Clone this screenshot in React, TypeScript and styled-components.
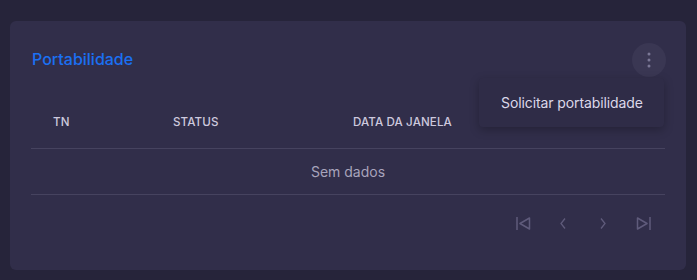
import React from 'react'
import styled, { createGlobalStyle } from 'styled-components'

const GlobalStyle = createGlobalStyle`
  html, body {
    margin: 0;
    padding: 0;
    background: #26243a;
    font-family: Inter, "Noto Sans", sans-serif;
  }
`

const Page = styled.div`
  padding: 21px 11px 11px 10px;
`

const Card = styled.section`
  position: relative;
  background: #312e4a;
  border-radius: 6px;
  padding: 22px 21px 19px 21px;
`

const CardHeader = styled.div`
  display: flex;
  align-items: center;
  justify-content: space-between;
  height: 34px;
`

const Title = styled.h2`
  margin: 0 0 2px 1px;
  font-size: 16px;
  font-weight: 500;
  color: #1b70f3;
`

const MenuButton = styled.button`
  width: 34px;
  height: 34px;
  border: none;
  border-radius: 50%;
  background: #3a3753;
  display: flex;
  align-items: center;
  justify-content: center;
  padding: 0;
  margin-right: -1px;
`

const Menu = styled.div`
  position: absolute;
  top: 57px;
  right: 22px;
  width: 185px;
  height: 49px;
  box-sizing: border-box;
  background: #2f2c47;
  border-radius: 4px;
  box-shadow: 0 3px 10px rgba(0, 0, 0, 0.25);
  display: flex;
  align-items: center;
  padding-left: 22px;
  font-size: 14px;
  letter-spacing: -0.1px;
  color: #dcd8ea;
`

const Table = styled.table`
  width: 100%;
  margin-top: 23px;
  border-collapse: collapse;
`

const Th = styled.th<{ w?: number }>`
  width: ${(p) => (p.w ? `${p.w}px` : 'auto')};
  height: 44px;
  padding: 0 0 4px 22px;
  text-align: left;
  font-size: 11.6px;
  font-weight: 500;
  letter-spacing: 0.1px;
  color: #cdc9de;
  border-bottom: 1px solid #46435f;
`

const EmptyCell = styled.td`
  height: 45px;
  padding: 0;
  text-align: center;
  font-size: 14px;
  color: #a8a4bc;
  border-bottom: 1px solid #46435f;
`

const Pager = styled.div`
  display: flex;
  justify-content: flex-end;
  align-items: center;
  height: 56px;
  padding-right: 2px;
`

const PageButton = styled.button`
  width: 40px;
  height: 40px;
  border: none;
  background: transparent;
  padding: 0;
  display: flex;
  align-items: center;
  justify-content: center;
  color: #5f5b7b;
`

const Dots = () => (
  <svg width="4" height="16" viewBox="0 0 4 16">
    <circle cx="2" cy="2" r="1.5" fill="#7b7896" />
    <circle cx="2" cy="8" r="1.5" fill="#7b7896" />
    <circle cx="2" cy="14" r="1.5" fill="#7b7896" />
  </svg>
)

const FirstIcon = () => (
  <svg width="15" height="13" viewBox="0 0 15 13" fill="none" stroke="currentColor" strokeWidth="1.5">
    <path d="M1 0v13" />
    <path d="M13.5 1L4 6.5l9.5 5.5z" strokeLinejoin="round" />
  </svg>
)

const LastIcon = () => (
  <svg width="15" height="13" viewBox="0 0 15 13" fill="none" stroke="currentColor" strokeWidth="1.5">
    <path d="M14 0v13" />
    <path d="M1.5 1L11 6.5 1.5 12z" strokeLinejoin="round" />
  </svg>
)

const PrevIcon = () => (
  <svg width="6" height="11" viewBox="0 0 6 11" fill="none" stroke="currentColor" strokeWidth="1.3">
    <path d="M5 0.5L1 5.5l4 5" />
  </svg>
)

const NextIcon = () => (
  <svg width="6" height="11" viewBox="0 0 6 11" fill="none" stroke="currentColor" strokeWidth="1.3">
    <path d="M1 0.5l4 5-4 5" />
  </svg>
)

const App = () => {
  return (
    <Page>
      <GlobalStyle />
      <Card>
        <CardHeader>
          <Title>Portabilidade</Title>
          <MenuButton aria-label="Mais opções">
            <Dots />
          </MenuButton>
        </CardHeader>
        <Menu>Solicitar portabilidade</Menu>
        <Table>
          <thead>
            <tr>
              <Th w={98}>TN</Th>
              <Th w={158}>STATUS</Th>
              <Th>DATA DA JANELA</Th>
            </tr>
          </thead>
          <tbody>
            <tr>
              <EmptyCell colSpan={3}>Sem dados</EmptyCell>
            </tr>
          </tbody>
        </Table>
        <Pager>
          <PageButton><FirstIcon /></PageButton>
          <PageButton><PrevIcon /></PageButton>
          <PageButton><NextIcon /></PageButton>
          <PageButton><LastIcon /></PageButton>
        </Pager>
      </Card>
    </Page>
  )
}

export default App
